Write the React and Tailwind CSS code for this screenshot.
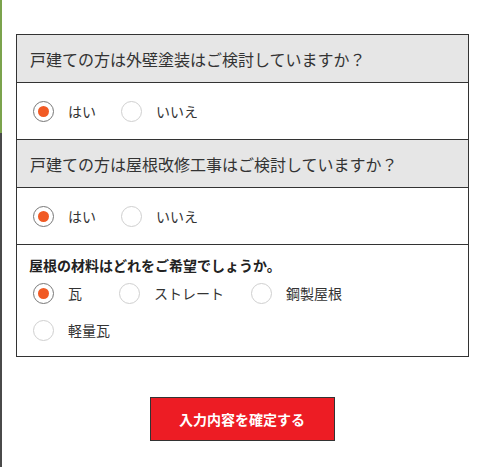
const Radio = ({ label, checked, gap = "mr-[30px]" }) => (
  <label className={`flex items-center ${gap}`}>
    <span
      className={`w-[21px] h-[21px] rounded-full border flex items-center justify-center bg-white ${
        checked ? "border-[#777]" : "border-[#cfcfcf]"
      }`}
    >
      {checked && <span className="w-[11px] h-[11px] rounded-full bg-[#f15a24]" />}
    </span>
    <span className="ml-[14px] text-[14px] text-[#333]">{label}</span>
  </label>
);

const Question = ({ title }) => (
  <>
    <div className="h-[48px] bg-[#e6e6e6] border-b border-[#333] flex items-center pl-[13px] text-[16px] text-[#333]">
      {title}
    </div>
    <div className="h-[57px] border-b border-[#333] flex items-center pl-[16px]">
      <Radio label="はい" checked gap="mr-[25px]" />
      <Radio label="いいえ" />
    </div>
  </>
);

export default function App() {
  return (
    <div
      className="relative w-[482px] h-[467px] bg-white"
      style={{ fontFamily: '"Noto Sans CJK JP", "Noto Sans", sans-serif' }}
    >
      <div className="absolute left-0 top-0 w-[2px] h-full bg-[#4a4a4a]">
        <div className="h-[133px] bg-[#7ba34c]" />
      </div>
      <div className="pt-[34px] pl-[16px]">
        <div className="w-[453px] border border-[#333]">
          <Question title="戸建ての方は外壁塗装はご検討していますか？" />
          <Question title="戸建ての方は屋根改修工事はご検討していますか？" />
          <div className="h-[111px] pl-[12px] pt-[10px]">
            <p className="text-[14px] font-bold text-[#222] leading-[20px]">
              屋根の材料はどれをご希望でしょうか。
            </p>
            <div className="flex flex-wrap pl-[4px] mt-[8px]">
              <div className="flex items-center h-[20px] mb-[17px]">
                <Radio label="瓦" checked gap="mr-[37px]" />
                <Radio label="ストレート" gap="mr-[27px]" />
                <Radio label="鋼製屋根" />
              </div>
              <div className="w-full flex items-center h-[20px]">
                <Radio label="軽量瓦" />
              </div>
            </div>
          </div>
        </div>
      </div>
      <div className="flex justify-center pl-[2px] mt-[40px]">
        <button className="w-[185px] h-[44px] bg-[#ed1c24] border border-[#333] text-white font-bold text-[14px]">
          入力内容を確定する
        </button>
      </div>
    </div>
  );
}
